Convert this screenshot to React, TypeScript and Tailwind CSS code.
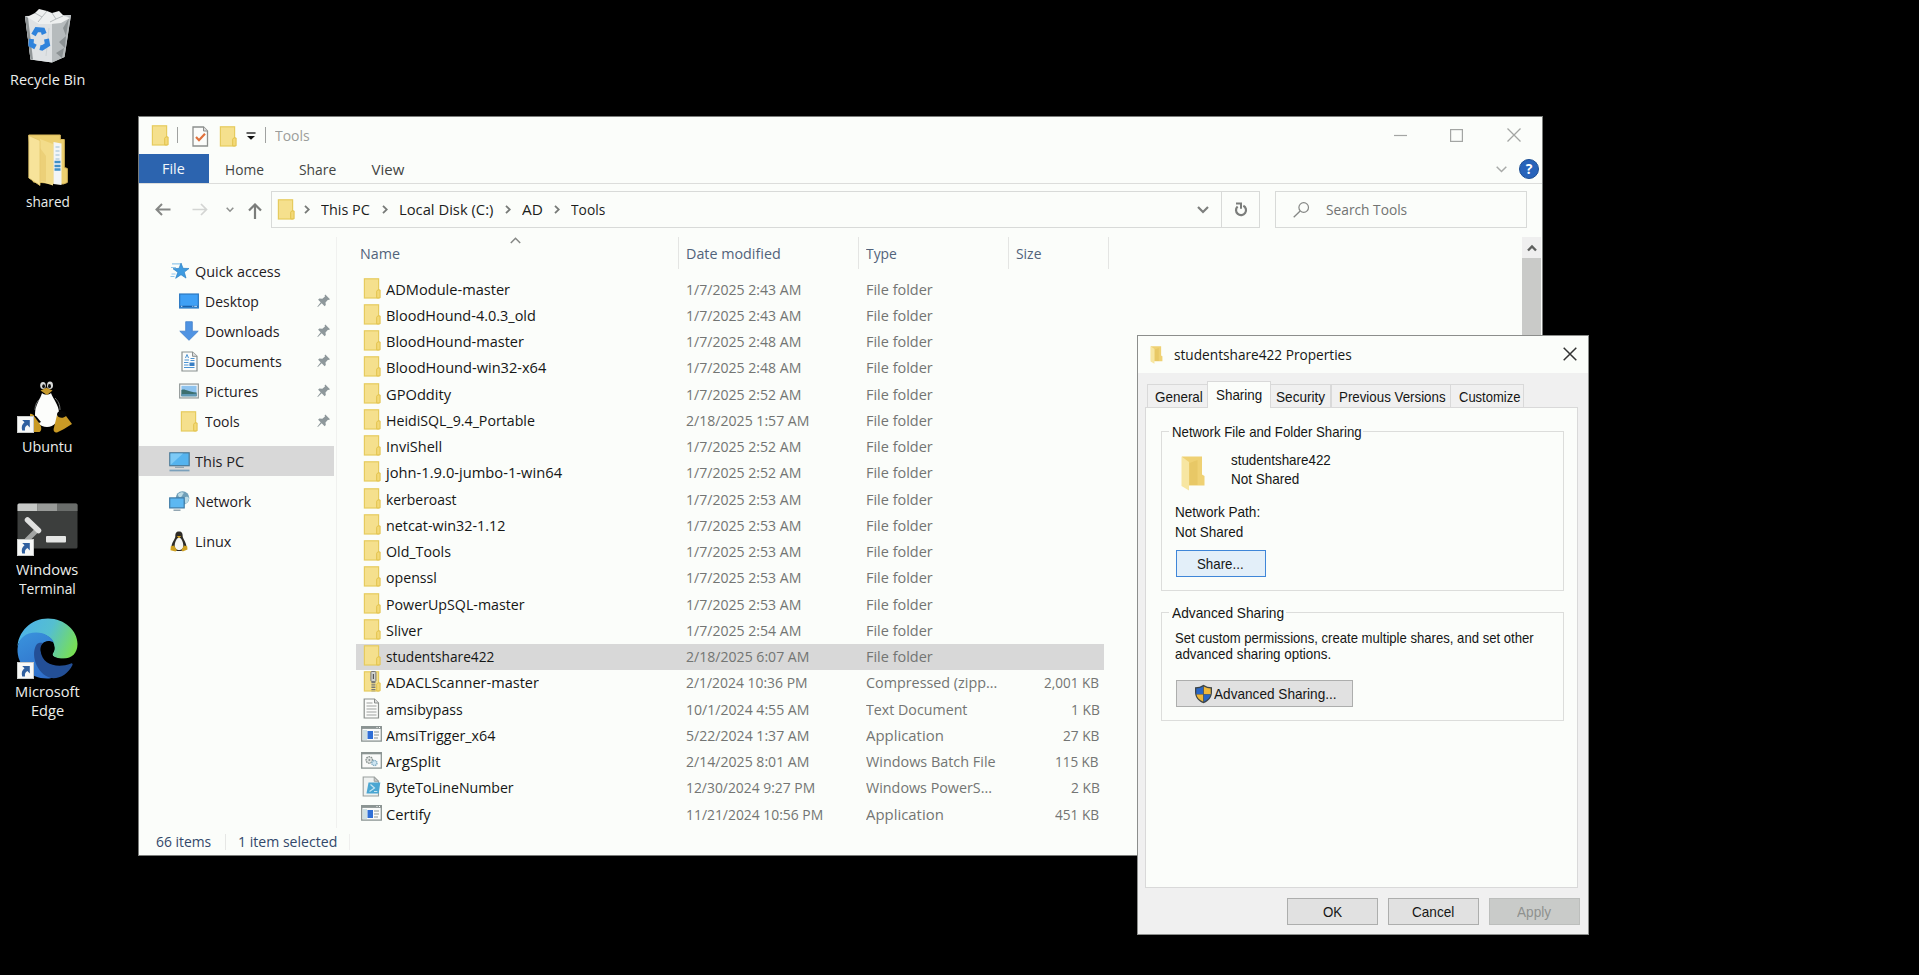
import { useLayoutEffect, useRef, useState } from "react";
import type { ReactNode } from "react";

/* Text condensed or widened to an exact run length. */
function Fit({ w, children, className = "" }: { w: number; children: string; className?: string }) {
  const ref = useRef<HTMLSpanElement>(null);
  const [scale, setScale] = useState(1);
  useLayoutEffect(() => {
    if (ref.current) setScale((w + 1.5) / ref.current.offsetWidth);
  }, [w, children]);
  return (
    <span className={`inline-flex shrink-0 whitespace-nowrap leading-none ${className}`} style={{ width: w }}>
      <span ref={ref} className="-ml-px inline-block shrink-0 origin-left" style={{ transform: `scaleX(${scale})` }}>
        {children}
      </span>
    </span>
  );
}

function Folder({ zip = false }: { zip?: boolean }) {
  return (
    <svg width="18" height="21" viewBox="-0.4 0 18 21" className="shrink-0">
      <rect x="1" y="0.8" width="14.2" height="19.2" fill="#f5e08d" stroke="#e6cb5e" strokeWidth="1.2" />
      <path d="M13.300 19.900v-6.600l1-1.400h2.400v8z" fill="#f3d978" stroke="#e2c24c" />
      {zip && (
        <g>
          <rect x="7.500" y="0.500" width="5" height="10" rx="1" fill="#d0d2cf" stroke="#777" />
          <path d="M10 3v5" stroke="#555" strokeWidth="1.2" />
          <path d="M10 11v9.500" stroke="#777" strokeWidth="4" strokeDasharray="1.3 1" />
        </g>
      )}
    </svg>
  );
}

function TextFile() {
  return (
    <svg width="18" height="21" viewBox="0 0 18 21">
      <path d="M1.200 1h10.300l4 4v15H1.200z" fill="#fbfcfa" stroke="#8b8f8c" strokeWidth="1.2" />
      <path d="M11.500 1v4h4" fill="#ddd" stroke="#8b8f8c" />
      <path d="M3.500 5h6M3.500 8h10M3.500 11h10M3.500 14h10M3.500 17h10" stroke="#9ea19f" />
    </svg>
  );
}

function AppFile() {
  return (
    <svg width="21" height="16" viewBox="0 0 21 16">
      <rect x="0.7" y="0.7" width="19.6" height="14.4" fill="#fafbfa" stroke="#8b9492" strokeWidth="1.3" />
      <path d="M0 1.600h21" stroke="#8b9492" strokeWidth="2.6" />
      <path d="M15.500 1.500h1M18 1.500h1" stroke="#fff" />
      <rect x="2" y="4" width="4" height="10" fill="#cfe0e2" />
      <rect x="6.5" y="5" width="5.5" height="8" fill="#2f6fd6" />
      <path d="M13 6h5M13 9h5M13 12h4" stroke="#8b9492" />
    </svg>
  );
}

function BatchFile() {
  return (
    <svg width="21" height="17" viewBox="0 0 21 17">
      <rect x="0.7" y="0.7" width="19.6" height="15.4" fill="#fafbfa" stroke="#8b9492" strokeWidth="1.3" />
      <path d="M0 1.300h21" stroke="#8b9492" strokeWidth="2" />
      <circle cx="8.3" cy="8" r="3.2" fill="#e2e5e4" stroke="#8b9492" strokeWidth="1.4" strokeDasharray="1.6 0.7" />
      <circle cx="8.3" cy="8" r="1" fill="#8b9492" />
      <circle cx="13.4" cy="11" r="2.6" fill="#cfe6f3" stroke="#84aec4" strokeWidth="1.4" strokeDasharray="1.4 0.6" />
    </svg>
  );
}

function PowerFile() {
  return (
    <svg width="19" height="21" viewBox="0 0 19 21">
      <path d="M1.200 1h11l4.300 4.300V20H1.200z" fill="#eff2f1" stroke="#9aa09e" strokeWidth="1.1" />
      <path d="M12.200 1v4.300h4.300z" fill="#ccc" stroke="#9aa09e" />
      <path d="M6.500 6.500h11.800L16.700 17.500H4.500z" fill="#4aa6d2" />
      <path d="M8.500 8.500l4 3.500-5 3.500M12 15.500h3.300" fill="none" stroke="#c4e4f2" strokeWidth="1.2" />
    </svg>
  );
}

function Pin() {
  return (
    <svg width="14" height="14" viewBox="0 0 14 14">
      <path d="M8.300 0.500L13 5.200l-1.300 0.800-0.700-0.300-2.500 2.700 0.300 2.600-1.200 1.200-2.900-2.900L0.900 13.100 0.300 12.800 3.700 8.300 1.100 5.700l1.200-1.200 3 0.300 2.700-2.400-0.400-0.900z" fill="#8e989b" />
    </svg>
  );
}

function Star() {
  return (
    <svg width="20" height="18" viewBox="0 0 20 18">
      <path d="M2 1.800h8M1 5.500h5M1.500 12h4M0.500 14.500h4" stroke="#93c7ec" strokeWidth="1.2" />
      <path d="M11 1l2 5.300 6 0.200-4.700 3.600 1.700 6-5-3.400-5.300 3.600 2.100-6L3 6.700l6-0.300z" fill="#3f9be0" stroke="#2a7fc4" strokeWidth="0.7" />
    </svg>
  );
}

function DesktopIcon() {
  return (
    <svg width="21" height="16" viewBox="0 0 21 16">
      <rect x="0.7" y="0.7" width="19.6" height="14.6" fill="#3fa0f5" stroke="#2b78c2" strokeWidth="1.3" />
      <path d="M1 13.700h19" stroke="#1b62ab" strokeWidth="1.5" />
      <path d="M2 13.600h1.500M14 13.600h1M16 13.600h3" stroke="#cfe8ff" />
    </svg>
  );
}

function DownArrow() {
  return (
    <svg width="20" height="20" viewBox="0 0 20 20">
      <path d="M6.700 0.700h6.600v9.500h5.900L10 19.300 0.800 10.200h5.900z" fill="#4f93e2" stroke="#3f7fcb" strokeWidth="0.8" />
    </svg>
  );
}

function DocIcon() {
  return (
    <svg width="17" height="21" viewBox="0 0 17 21">
      <path d="M1 1h10.500L16 5.300V20H1z" fill="#fbfcfb" stroke="#8a9190" strokeWidth="1.2" />
      <path d="M11.500 1v4.300H16" fill="#ddd" stroke="#8a9190" />
      <path d="M4.500 7l1.500-3.500L7.500 7M3.500 9h4.500M9.500 7.500h4M9.500 9.500h4M3 11.500h4.500M3 14h4.500M3 16.500h10.500" stroke="#4a92d2" fill="none" />
      <rect x="8.5" y="11.5" width="5" height="3.5" fill="#3a7fc4" />
    </svg>
  );
}

function PicIcon() {
  return (
    <svg width="21" height="16" viewBox="0 0 21 16">
      <rect x="0.7" y="0.7" width="19.6" height="14.6" fill="#fcfdfc" stroke="#949b9a" strokeWidth="1.3" />
      <rect x="2.5" y="2.5" width="16" height="11" fill="#8ec3ee" />
      <path d="M2.500 7c4-2 6 2 16 2.500v4H2.500z" fill="#3c6f6e" />
      <path d="M2.500 11.500c5-1 10 0 16-0.500v2.500h-16z" fill="#5f98b5" />
    </svg>
  );
}

function PcIcon() {
  return (
    <svg width="21" height="20" viewBox="0 0 21 20">
      <rect x="0.8" y="0.8" width="19.4" height="12.9" fill="#55b3ee" stroke="#4a7795" strokeWidth="1.2" />
      <path d="M1.500 13L14 1.500H1.500z" fill="#7dcaf6" />
      <path d="M6 15.300h9" stroke="#8fa2ad" strokeWidth="1.2" />
      <path d="M0.500 18.500h20" stroke="#7aa0bb" strokeWidth="1.7" />
    </svg>
  );
}

function NetIcon() {
  return (
    <svg width="21" height="20" viewBox="0 0 21 20">
      <circle cx="13.5" cy="7" r="6.8" fill="#6f9fb8" />
      <path d="M9 3c3-2.500 5-2 6-1-2 1-1 3-3 4s-3-1-3-3zM15 7c2-2 4-1 5 0 0 3-2 5-3.500 6z" fill="#bcdbe5" />
      <rect x="0.7" y="6.9" width="14.5" height="10" fill="#5db8f2" stroke="#3f7ba5" strokeWidth="1.2" />
      <path d="M4.500 19.200h7" stroke="#7f97a4" strokeWidth="1.3" />
    </svg>
  );
}

function TuxSmall() {
  return (
    <svg width="18" height="21" viewBox="0 0 18 21">
      <path d="M9 0.500c3 0 3.700 2 3.700 5 0 2 3.800 6 3.800 10.500 0 2-3 4-7.500 4s-7.500-2-7.500-4C1.500 11.500 5.300 8 5.300 5.500c0-3 0.700-5 3.700-5z" fill="#2d2b26" />
      <path d="M9 6.500c2 0 4.300 4.500 4.300 8s-2 4.500-4.300 4.500-4.300-1-4.300-4.500 2.300-8 4.300-8z" fill="#f5f6f3" />
      <path d="M6.800 5h4.400L9 7.200z" fill="#d9a520" />
      <path d="M0.800 15.200l3.200-0.700 3 4.500-1.500 1.600-5-1.300zM17.200 15.200l-3.200-0.700-2.500 4.500 1.200 1.600 4.800-2z" fill="#cfa01f" />
    </svg>
  );
}

function Shortcut() {
  return (
    <svg width="17" height="17" viewBox="0 0 17 17" className="absolute bottom-0 left-0">
      <rect x="0.5" y="0.5" width="16" height="16" fill="#f7f8f7" stroke="#c9cbca" />
      <path d="M5.200 4h7.600v7.400l-2.400-2.300c-2 1-2.800 2.700-2.400 5.400H5.200c-1-3.600-0.300-6 2.300-8.200z" fill="#2f5f9f" />
    </svg>
  );
}

function RecycleBin() {
  return (
    <svg width="50" height="56" viewBox="0 0 50 56">
      <path d="M2 8l46-1-6.500 42L29 54.500 7.500 51.500z" fill="#cfd3d4" />
      <path d="M2 8l27 7.500V54.500L7.500 51.500z" fill="#dfe2e4" />
      <path d="M2 8l3 1.500 5 42-2.500 0z" fill="#8f9496" />
      <path d="M48 7l-19 8.500V54.500L41.500 49z" fill="#b6bbbd" />
      <path d="M46 10l-6 10 3 8zM43 28l-7 6 6 6zM41 40l-8 5 6 5z" fill="#8c9294" />
      <path d="M4 9l8-4 4-4 8 2 5 2 7-2 5 5 6 2-9 5-10 1-12 0z" fill="#eef0f0" />
      <path d="M12 5l7 4 5-6M19 9l-4 5M29 5l4 6 7-3M33 11l-6 3" stroke="#b6bbbd" fill="none" />
      <path d="M26 20l-3 28" stroke="#ced3d5" fill="none" />
      <g fill="none" stroke="#2f83dc" strokeWidth="5">
        <path d="M10.500 27l3.200-5.500 6 0.500 1.500 4" />
        <path d="M23.500 31l1 5.500-5.500 3.500-2-0.500" />
        <path d="M12.500 39l-4.500-2.500 0.500-5.500" />
      </g>
    </svg>
  );
}

function SharedFolder() {
  return (
    <svg width="40" height="52" viewBox="0 0 40 52">
      <path d="M0.800 1h31.500v4.500h4v28l3 1v14l-4 1.500-30-2z" fill="#eccf70" stroke="#d9b95b" />
      <path d="M25.500 8l8 1.500V51l-8-1z" fill="#f2f5f7" />
      <path d="M27.500 13h4M27.500 17h4M27.500 21h4M27.500 25h4" stroke="#b8cfe0" strokeWidth="1.5" />
      <path d="M26.500 28h6M26.500 32h6M26.500 35.500h6" stroke="#3e8fc6" strokeWidth="2.5" />
      <path d="M12 5l13 5v41.500l-13-4z" fill="#f3dc8a" />
      <path d="M0.800 1.500L12 6.500v45L0.800 44z" fill="#f7e39a" stroke="#e3c76a" strokeWidth="0.8" />
      <path d="M12 14l6 8v26l-6-1z" fill="#e8cb70" opacity="0.7" />
    </svg>
  );
}

function TuxLarge() {
  return (
    <svg width="61" height="52" viewBox="0 0 61 52" className="absolute inset-0">
      <path d="M18 29c0-6 3-10 6-12M43 29c0-6-2-9-5-12" stroke="#6b6e6d" strokeWidth="1" fill="none" />
      <path d="M25 12c2 2 7 2 9 0 2 6 8 12 8 20 0 8-5 14-12 14S18 41 18 33c0-9 5-14 7-21z" fill="#fcfdfb" />
      <ellipse cx="26" cy="4.5" rx="2.8" ry="3.6" fill="#d8dad9" />
      <ellipse cx="33" cy="4.3" rx="3" ry="3.8" fill="#d8dad9" />
      <ellipse cx="26.6" cy="5.2" rx="1.4" ry="2" fill="#111" />
      <ellipse cx="32.5" cy="5.2" rx="1.5" ry="2.1" fill="#111" />
      <path d="M23.500 9.500l6-2.800 6 2.800-5.500 4.500z" fill="#c79a2c" />
      <path d="M13 33c3-1 6 4 8.500 8 3 4 4 8 1 10H13z" fill="#c99a25" />
      <path d="M19 35l5 6-2 1-5-7z" fill="#050505" />
      <ellipse cx="44.5" cy="33.5" rx="4.5" ry="3.5" fill="#050505" />
      <path d="M40 34c1 3 6 4 9 1l6 8-8 5-7 3.500c-3 0-4-2-3-5z" fill="#c99a25" />
    </svg>
  );
}

function TerminalIcon() {
  return (
    <svg width="61" height="53" viewBox="0 0 61 53" className="absolute inset-0">
      <rect x="0.5" y="0.5" width="60" height="45" rx="1.5" fill="#3c3e3d" />
      <path d="M0.500 2a1.500 1.500 0 0 1 1.500-1.500h18.500v7.500h-20z" fill="#c6c8c6" />
      <path d="M20.500 0.500h20v7.500h-20z" fill="#989a98" />
      <path d="M40.500 0.500H59a1.500 1.500 0 0 1 1.500 1.500v6h-20z" fill="#6a6d6b" />
      <path d="M21 26L9.500 37.500" stroke="#a3a5a4" strokeWidth="5" />
      <path d="M10.500 17l11 10.500" stroke="#e0e1e0" strokeWidth="5.5" strokeLinecap="round" />
      <rect x="29" y="33" width="20" height="6.5" rx="1" fill="#e4e5e4" />
    </svg>
  );
}

function EdgeIcon() {
  return (
    <svg width="61" height="61" viewBox="0 0 61 61" className="absolute inset-0">
      <defs>
        <linearGradient id="edge-top" x1="0" y1="0.3" x2="1" y2="0.6">
          <stop offset="0" stopColor="#4db2ea" />
          <stop offset="0.5" stopColor="#55bfd0" />
          <stop offset="1" stopColor="#78df55" />
        </linearGradient>
        <linearGradient id="edge-left" x1="0" y1="0" x2="0.5" y2="1">
          <stop offset="0" stopColor="#3a94dd" />
          <stop offset="1" stopColor="#2f6fca" />
        </linearGradient>
      </defs>
      <path d="M0.500 30C0.500 14 14 0.500 31 0.500S60.500 13 60.500 26c0 9-5.500 14.500-14 14.500-7 0-11-2-11-4 0-1.500 2-2.500 2-7 0-8-8-14-17-14S0.500 22 0.500 30z" fill="url(#edge-top)" />
      <path d="M0.500 31C1 20 9 14.500 19 14.500c9 0 16 5 18 10-7-4-14 0-14 9 0 13 12 20 23 18.500C42 58 36 60.500 30 60.500 13 60.500 0 47 0.500 31z" fill="url(#edge-left)" />
      <path d="M20 26c-7 9-1 30 14 34 9 1 17-4 21.500-13 0.500-1-0.500-2-1.500-1.500C40 51 25 46 24 34c-0.500-4 0.500-7 2-9-2-0.500-4-0.500-6 1z" fill="#234f96" />
      <path d="M31 23.500c-5 0-8 4-7.500 9C24.500 41 35 48 46 46.500c4-0.600 7-2 8-2.700l2-5c-3 1.500-6 2-9.500 2-7 0-11-2-11-4.300 0-1.500 2-2.500 2-6 0-4-3-7-6.500-7z" fill="#000" />
    </svg>
  );
}

function Shield() {
  return (
    <svg width="19" height="20" viewBox="0 0 19 20">
      <path d="M9.500 0.800c2.500 1.700 5 2.500 8.500 2.500v5c0 5-3.500 9-8.500 11-5-2-8.500-6-8.500-11v-5c3.500 0 6-0.800 8.500-2.500z" fill="#3e4547" />
      <path d="M9.200 2.600V10.300H2.300V4.600c2.500 0 4.700-0.700 6.900-2z" fill="#2b66c4" />
      <path d="M9.800 2.600V10.300h6.900V4.600c-2.500 0-4.700-0.700-6.900-2z" fill="#f0b83a" />
      <path d="M2.500 10.600h6.700v7.200c-3.700-1.700-6.200-4.100-6.700-7.200z" fill="#f0b83a" />
      <path d="M16.500 10.600h-6.700v7.200c3.700-1.700 6.200-4.100 6.700-7.200z" fill="#2b66c4" />
    </svg>
  );
}

function OpenFolder({ w, h }: { w: number; h: number }) {
  return (
    <svg width={w} height={h} viewBox="0 0 24 35">
      <path d="M1 0.500h20v18l2.500 1.500v9.500H7L1 28z" fill="#efd173" />
      <path d="M8.500 7l8-3v25H8.500z" fill="#e8c866" />
      <path d="M0.500 0.500L8 6v28.500L0.500 30z" fill="#f7e6a2" />
    </svg>
  );
}

function Chevron() {
  return (
    <svg width="6" height="9" viewBox="0 0 6 9" className="shrink-0">
      <path d="M1 0.800l3.800 3.700L1 8.200" fill="none" stroke="#777a78" strokeWidth="1.8" />
    </svg>
  );
}

type Row = { name: string; nw: number; date: string; dw: number; type?: string; tw?: number; size?: string; sw?: number; icon?: ReactNode };

const rows: Row[] = [
  { name: "ADModule-master", nw: 123, date: "1/7/2025 2:43 AM", dw: 114 },
  { name: "BloodHound-4.0.3_old", nw: 148, date: "1/7/2025 2:43 AM", dw: 114 },
  { name: "BloodHound-master", nw: 136, date: "1/7/2025 2:48 AM", dw: 114 },
  { name: "BloodHound-win32-x64", nw: 159, date: "1/7/2025 2:48 AM", dw: 114 },
  { name: "GPOddity", nw: 64, date: "1/7/2025 2:52 AM", dw: 114 },
  { name: "HeidiSQL_9.4_Portable", nw: 147, date: "2/18/2025 1:57 AM", dw: 121.5 },
  { name: "InviShell", nw: 54.5, date: "1/7/2025 2:52 AM", dw: 114 },
  { name: "john-1.9.0-jumbo-1-win64", nw: 175, date: "1/7/2025 2:52 AM", dw: 114 },
  { name: "kerberoast", nw: 69, date: "1/7/2025 2:53 AM", dw: 114 },
  { name: "netcat-win32-1.12", nw: 118, date: "1/7/2025 2:53 AM", dw: 114 },
  { name: "Old_Tools", nw: 63, date: "1/7/2025 2:53 AM", dw: 114 },
  { name: "openssl", nw: 49.5, date: "1/7/2025 2:53 AM", dw: 114 },
  { name: "PowerUpSQL-master", nw: 137, date: "1/7/2025 2:53 AM", dw: 114 },
  { name: "Sliver", nw: 35, date: "1/7/2025 2:54 AM", dw: 114 },
  { name: "studentshare422", nw: 107, date: "2/18/2025 6:07 AM", dw: 121.5 },
  { name: "ADACLScanner-master", nw: 151.5, date: "2/1/2024 10:36 PM", dw: 120, type: "Compressed (zipp...", tw: 129.5, size: "2,001 KB", sw: 53.5, icon: <Folder zip /> },
  { name: "amsibypass", nw: 75.5, date: "10/1/2024 4:55 AM", dw: 121.5, type: "Text Document", tw: 100, size: "1 KB", sw: 27, icon: <TextFile /> },
  { name: "AmsiTrigger_x64", nw: 108, date: "5/22/2024 1:37 AM", dw: 121.5, type: "Application", tw: 76, size: "27 KB", sw: 35, icon: <AppFile /> },
  { name: "ArgSplit", nw: 53, date: "2/14/2025 8:01 AM", dw: 121.5, type: "Windows Batch File", tw: 128, size: "115 KB", sw: 42.5, icon: <BatchFile /> },
  { name: "ByteToLineNumber", nw: 126.5, date: "12/30/2024 9:27 PM", dw: 128, type: "Windows PowerS...", tw: 124.5, size: "2 KB", sw: 27, icon: <PowerFile /> },
  { name: "Certify", nw: 43.5, date: "11/21/2024 10:56 PM", dw: 135.5, type: "Application", tw: 76, size: "451 KB", sw: 43, icon: <AppFile /> },
];

const pinned = [
  { label: "Desktop", w: 52.5, icon: <DesktopIcon /> },
  { label: "Downloads", w: 73, icon: <DownArrow /> },
  { label: "Documents", w: 75, icon: <DocIcon /> },
  { label: "Pictures", w: 51.5, icon: <PicIcon /> },
  { label: "Tools", w: 33, icon: <Folder /> },
];

const crumbs = [
  { label: "This PC", w: 47.5 },
  { label: "Local Disk (C:)", w: 93 },
  { label: "AD", w: 19 },
  { label: "Tools", w: 32.5 },
];

function TitleBar() {
  return (
    <div className="flex h-[37px] shrink-0 items-center pb-px pl-3">
      <Folder />
      <span className="ml-[8px] h-4 w-px bg-[#a0a2a0]" />
      <svg width="17" height="21" viewBox="0 0 17 21" className="mt-0.5 ml-[14px]">
        <path d="M1 1h10.500L15.500 5v15H1z" fill="#fbfcfa" stroke="#8c8f8d" strokeWidth="1.3" />
        <path d="M11.500 1v4h4" fill="#ddd" stroke="#8c8f8d" />
        <path d="M4 11l3 3.200 6-6.400" fill="none" stroke="#e0713c" strokeWidth="2.2" />
      </svg>
      <span className="mt-0.5 ml-[10px]"><Folder /></span>
      <svg width="10" height="8" viewBox="0 0 10 8" className="mt-0.5 ml-[9px]">
        <path d="M0.500 1h9" stroke="#222" strokeWidth="1.4" />
        <path d="M1 4h8L5 7.800z" fill="#111" />
      </svg>
      <span className="ml-[9px] h-4 w-px bg-[#a0a2a0]" />
      <Fit w={33} className="ml-[10px] text-[#9b9d9b]">Tools</Fit>
      <div className="ml-auto flex items-center pr-[21px]">
        <svg width="13" height="13" className="mr-[43px]"><path d="M0 6.500h13" stroke="#a3a5a3" strokeWidth="1.2" /></svg>
        <svg width="13" height="13" className="mr-[44px]"><rect x="0.6" y="0.6" width="11.8" height="11.8" fill="none" stroke="#a3a5a3" strokeWidth="1.2" /></svg>
        <svg width="14" height="14"><path d="M0.500 0.500l13 13M13.500 0.500l-13 13" stroke="#a3a5a3" strokeWidth="1.3" /></svg>
      </div>
    </div>
  );
}

function RibbonTabs() {
  return (
    <div className="flex h-[30px] shrink-0 items-center border-b border-[#dcdddb] pt-px">
      <div className="-mt-px flex h-[calc(100%+1px)] w-[70px] items-center justify-center bg-[#2c64af] text-[#f3f7fb]"><Fit w={21.5}>File</Fit></div>
      <Fit w={37} className="ml-[17px] text-[#434543]">Home</Fit>
      <Fit w={35.5} className="ml-[37px] text-[#434543]">Share</Fit>
      <Fit w={31.5} className="ml-[37px] text-[#434543]">View</Fit>
      <svg width="11" height="7" className="ml-auto"><path d="M0.700 0.800l4.800 4.700 4.800-4.700" fill="none" stroke="#a8aaa8" strokeWidth="1.5" /></svg>
      <div className="mr-[3px] mb-px ml-[12px] flex size-5 items-center justify-center rounded-full border border-[#1d4f94] bg-[#2763ba] text-[14px] leading-none font-bold text-white">?</div>
    </div>
  );
}

function AddressRow() {
  return (
    <div className="flex h-[53px] shrink-0 items-center pb-[2px] pl-4">
      <svg width="16" height="13"><path d="M15.500 6.500H1.500M7 1L1.500 6.500 7 12" fill="none" stroke="#858785" strokeWidth="2" /></svg>
      <svg width="16" height="13" className="ml-[21px]"><path d="M0.500 6.500h14M9 1l5.500 5.500L9 12" fill="none" stroke="#d3d5d3" strokeWidth="1.7" /></svg>
      <svg width="8" height="6" className="ml-[18px]"><path d="M0.700 0.800L4 4.200l3.300-3.400" fill="none" stroke="#8f918f" strokeWidth="1.6" /></svg>
      <svg width="14" height="16" className="mt-0.5 ml-[14px]"><path d="M7 16V1.500M1 7.500l6-6 6 6" fill="none" stroke="#7b7d7b" strokeWidth="2.2" /></svg>
      <div className="ml-[9px] flex h-[37px] w-[989px] border border-[#d8dad8]">
        <div className="flex flex-1 items-center pl-[5px]">
          <Folder />
          <div className="flex items-center pl-[9px]">
            {crumbs.map((c) => (
              <div key={c.label} className="flex items-center">
                <Chevron />
                <Fit w={c.w} className="mr-[12px] ml-[12px] text-[#1c1d1c]">{c.label}</Fit>
              </div>
            ))}
          </div>
          <svg width="12" height="8" className="mr-[12px] ml-auto"><path d="M1 1l5 5 5-5" fill="none" stroke="#7d7f7d" strokeWidth="2.2" /></svg>
        </div>
        <div className="flex w-[38px] items-center justify-center border-l border-[#d8dad8]">
          <svg width="14" height="15" viewBox="0 0 14 15">
            <path d="M9.300 3.700A5 5 0 1 1 3.600 4.500" fill="none" stroke="#7b7d7b" strokeWidth="2.2" />
            <path d="M2 1.500h5v5.200" fill="none" stroke="#7b7d7b" strokeWidth="2" />
          </svg>
        </div>
      </div>
      <div className="ml-[15px] flex h-[37px] w-[252px] items-center border border-[#d8dad8] pl-[17px]">
        <svg width="17" height="16"><circle cx="10.7" cy="5.5" r="4.8" fill="none" stroke="#858785" strokeWidth="1.2" /><path d="M7.200 9L0.700 15.300" stroke="#858785" strokeWidth="1.3" /></svg>
        <Fit w={80} className="ml-[17px] text-[#727472]">Search Tools</Fit>
      </div>
    </div>
  );
}

function Sidebar() {
  return (
    <nav className="flex w-[198px] shrink-0 flex-col border-r border-[#f0f1ef] pt-[19px] text-[#1f201f]">
      <div className="flex h-[30px] items-center pl-[31px]"><span className="flex w-[25.5px]"><Star /></span><Fit w={84}>Quick access</Fit></div>
      {pinned.map((p) => (
        <div key={p.label} className="flex h-[30px] items-center pl-[40px]">
          <span className="flex w-5 justify-center">{p.icon}</span>
          <Fit w={p.w} className="ml-[6.5px]">{p.label}</Fit>
          <span className="mr-[5px] ml-auto"><Pin /></span>
        </div>
      ))}
      <div className="mt-[10px] mr-[2.5px] flex h-[30px] items-center bg-[#d8d8d8] pl-[29.5px]"><span className="flex w-[27px] pt-0.5"><PcIcon /></span><Fit w={48}>This PC</Fit></div>
      <div className="mt-[10px] flex h-[30px] items-center pl-[29.5px]"><span className="flex w-[27px]"><NetIcon /></span><Fit w={55}>Network</Fit></div>
      <div className="mt-[10px] flex h-[30px] items-center pl-[31px]"><span className="flex w-[25.5px]"><TuxSmall /></span><Fit w={35}>Linux</Fit></div>
    </nav>
  );
}

function FileList() {
  return (
    <div className="flex flex-1 flex-col">
      <div className="flex h-8 items-center text-[#52637a]">
        <div className="flex h-full w-[342px] items-center border-r border-[#e4e5e3] pl-[24px]">
          <Fit w={38.5}>Name</Fit>
          <svg width="11" height="7" className="mb-[26px] ml-[110.5px]"><path d="M0.800 6L5.500 1.300 10.200 6" fill="none" stroke="#858785" strokeWidth="1.5" /></svg>
        </div>
        <div className="flex h-full w-[180px] items-center border-r border-[#e4e5e3] pl-2"><Fit w={93}>Date modified</Fit></div>
        <div className="flex h-full w-[150px] items-center border-r border-[#e4e5e3] pl-2"><Fit w={29}>Type</Fit></div>
        <div className="flex h-full w-[100px] items-center border-r border-[#e4e5e3] pl-2"><Fit w={23.5}>Size</Fit></div>
      </div>
      <div className="flex flex-col pt-[7px]">
        {rows.map((r) => (
          <div key={r.name} className={`ml-[19px] flex h-[26.25px] w-[748px] items-center ${r.name === "studentshare422" ? "bg-[#d8d8d8]" : ""}`}>
            <span className="mb-0.5 flex w-[31px] justify-center">{r.icon ?? <Folder />}</span>
            <span className="flex w-[300px]"><Fit w={r.nw} className="text-[#151615]">{r.name}</Fit></span>
            <span className="flex w-[179.5px]"><Fit w={r.dw} className="text-[#737573]">{r.date}</Fit></span>
            <span className="flex w-[150px]"><Fit w={r.tw ?? 65} className="text-[#737573]">{r.type ?? "File folder"}</Fit></span>
            <span className="flex w-[82px] justify-end">{r.size && <Fit w={r.sw ?? 30} className="text-[#737573]">{r.size}</Fit>}</span>
          </div>
        ))}
      </div>
    </div>
  );
}

function Explorer() {
  return (
    <section className="absolute top-[116px] left-[138px] flex h-[740px] w-[1405px] flex-col border border-[#7a7c7a] bg-[#fbfdfa]">
      <TitleBar />
      <RibbonTabs />
      <AddressRow />
      <div className="flex flex-1">
        <Sidebar />
        <FileList />
        <div className="mr-px flex w-[19px] flex-col items-center bg-[#c9cac8]">
          <div className="flex h-[21px] w-full items-center justify-center bg-[#efefef]">
            <svg width="10" height="8"><path d="M1 6.500l4-4 4 4" fill="none" stroke="#5e605e" strokeWidth="2.4" /></svg>
          </div>
        </div>
      </div>
      <div className="flex h-[27px] shrink-0 items-center pl-[18px] text-[#32486a]">
        <Fit w={54}>66 items</Fit>
        <span className="ml-[14px] h-4 w-px bg-[#e6e7e5]" />
        <Fit w={98} className="ml-[13px]">1 item selected</Fit>
        <span className="ml-3 h-4 w-px bg-[#efefee]" />
      </div>
    </section>
  );
}

function Group({ label, w, className, children }: { label: string; w: number; className: string; children: ReactNode }) {
  return (
    <div className={`relative mr-[13px] ml-[15px] flex flex-col border border-[#dcdddb] pl-[14px] ${className}`}>
      <span className="absolute -top-2 left-[7px] flex bg-[#fbfdfa] pr-0.5 pl-1"><Fit w={w}>{label}</Fit></span>
      {children}
    </div>
  );
}

function PropertiesDialog() {
  const tab = "flex h-[23px] items-center border border-b-0 border-[#d9d9d9] bg-[#f0f0f0]";
  const button = "flex h-[27px] items-center justify-center border border-[#adaead] bg-[#e1e1e1]";
  return (
    <section className="absolute top-[335px] left-[1137px] flex h-[600px] w-[452px] flex-col border border-[#8c8e8c] bg-[#f0f0f0]">
      <div className="flex h-[37px] shrink-0 items-center bg-[#fbfdfa] pr-[11px] pl-[12px]">
        <OpenFolder w={13} h={18} />
        <Fit w={176} className="ml-[12px] text-[#161716]">studentshare422 Properties</Fit>
        <svg width="14" height="14" className="mb-0.5 ml-auto"><path d="M0.700 0.700l12.600 12.600M13.300 0.700L0.700 13.300" stroke="#333" strokeWidth="1.5" /></svg>
      </div>
      <div className="flex flex-1 flex-col pt-[8px] pr-[10px] pl-[7px] font-['Liberation_Sans',sans-serif] text-[#151615]">
        <div className="z-10 -mb-px flex h-[27px] items-end pl-0.5">
          <div className={`${tab} mb-px w-[60px] border-r-0 pl-[8px]`}><Fit w={46}>General</Fit></div>
          <div className="flex h-[27px] w-[64px] items-center border border-b-0 border-[#d9d9d9] bg-[#fbfdfa] pb-0.5 pl-[9px]"><Fit w={45}>Sharing</Fit></div>
          <div className={`${tab} mb-px w-[60px] border-l-0 pl-[6px]`}><Fit w={47.5}>Security</Fit></div>
          <div className={`${tab} mb-px w-[120px] pl-[8px]`}><Fit w={105}>Previous Versions</Fit></div>
          <div className={`${tab} mb-px w-[73px] border-l-0 pl-[9px]`}><Fit w={60}>Customize</Fit></div>
        </div>
        <div className="flex h-[481px] flex-col border border-[#d9d9d9] bg-[#fbfdfa]">
          <Group label="Network File and Folder Sharing" w={188} className="mt-[23px] h-[160px]">
            <div className="flex pt-[20px]">
              <span className="mt-[4px] ml-[5px] w-[51px]"><OpenFolder w={24} h={35} /></span>
              <div className="flex flex-col gap-[4px]">
                <Fit w={98.5}>studentshare422</Fit>
                <Fit w={67}>Not Shared</Fit>
              </div>
            </div>
            <Fit w={83.5} className="mt-[13px]">Network Path:</Fit>
            <Fit w={67} className="mt-[5px]">Not Shared</Fit>
            <button className="mt-[11px] flex h-[27px] w-[90px] items-center justify-center border border-[#3f86d8] bg-[#e3eff9]"><Fit w={45.5}>Share...</Fit></button>
          </Group>
          <Group label="Advanced Sharing" w={111} className="mt-[21px] h-[109px]">
            <Fit w={357} className="mt-[17px]">Set custom permissions, create multiple shares, and set other</Fit>
            <Fit w={154.5} className="mt-px">advanced sharing options.</Fit>
            <button className={`${button} mt-[19px] w-[177px]`}><Shield /><Fit w={121} className="ml-0.5">Advanced Sharing...</Fit></button>
          </Group>
        </div>
        <div className="-mr-0.5 flex justify-end gap-[10px] pt-[10px]">
          <button className={`${button} w-[91px]`}><Fit w={18}>OK</Fit></button>
          <button className={`${button} w-[91px]`}><Fit w={41}>Cancel</Fit></button>
          <button className="flex h-[27px] w-[91px] items-center justify-center border border-[#bcbebc] bg-[#c9cbc9] text-[#8f918f]"><Fit w={33}>Apply</Fit></button>
        </div>
      </div>
    </section>
  );
}

function DesktopItem({ top, icon, lines }: { top: string; icon: ReactNode; lines: [string, number][] }) {
  return (
    <div className={`absolute left-0 flex w-[95px] flex-col items-center text-[#eceeec] ${top}`}>
      {icon}
      <div className="flex flex-col items-center gap-1">
        {lines.map(([text, w]) => <Fit key={text} w={w}>{text}</Fit>)}
      </div>
    </div>
  );
}

export default function App() {
  return (
    <main className="relative h-[975px] w-[1919px] overflow-hidden bg-black font-['Open_Sans','Noto_Sans',sans-serif] text-[15px]">
      <DesktopItem top="top-[7px]" icon={<div className="h-[65px] pt-px"><RecycleBin /></div>} lines={[["Recycle Bin", 73.5]]} />
      <DesktopItem top="top-[134px]" icon={<div className="h-[60px]"><SharedFolder /></div>} lines={[["shared", 42]]} />
      <DesktopItem top="top-[381px]" icon={<div className="relative mb-[6px] h-[52px] w-[61px]"><TuxLarge /><Shortcut /></div>} lines={[["Ubuntu", 49]]} />
      <DesktopItem top="top-[503px]" icon={<div className="relative mb-[6px] h-[53px] w-[61px]"><TerminalIcon /><Shortcut /></div>} lines={[["Windows", 61], ["Terminal", 55.5]]} />
      <DesktopItem top="top-[618px]" icon={<div className="relative mb-[5px] h-[61px] w-[61px]"><EdgeIcon /><Shortcut /></div>} lines={[["Microsoft", 63], ["Edge", 31.5]]} />
      <Explorer />
      <PropertiesDialog />
    </main>
  );
}
